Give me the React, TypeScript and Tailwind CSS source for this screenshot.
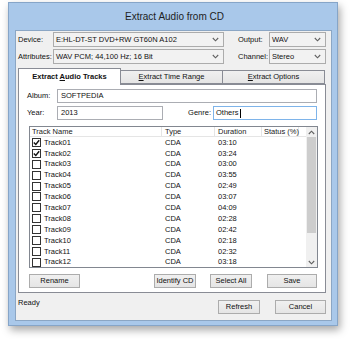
import React from 'react';

const tracks = [
  { name: 'Track01', dur: '03:10', on: true },
  { name: 'Track02', dur: '03:24', on: true },
  { name: 'Track03', dur: '03:00', on: false },
  { name: 'Track04', dur: '03:55', on: false },
  { name: 'Track05', dur: '02:49', on: false },
  { name: 'Track06', dur: '03:07', on: false },
  { name: 'Track07', dur: '04:09', on: false },
  { name: 'Track08', dur: '02:28', on: false },
  { name: 'Track09', dur: '02:42', on: false },
  { name: 'Track10', dur: '02:18', on: false },
  { name: 'Track11', dur: '02:32', on: false },
  { name: 'Track12', dur: '03:18', on: false },
];

const Chevron = ({ up = false }: { up?: boolean }) => (
  <svg width="7" height="5" viewBox="0 0 7 5" className={up ? 'rotate-180' : ''}>
    <path d="M0.8 1 L3.5 3.8 L6.2 1" fill="none" stroke="#606060" strokeWidth="1.1" />
  </svg>
);

const Check = ({ on }: { on: boolean }) => (
  <span className="flex h-[9px] w-[9px] shrink-0 items-center justify-center border border-[#333] bg-white">
    {on && (
      <svg width="7" height="7" viewBox="0 0 7 7">
        <path d="M0.8 3.4 L2.8 5.4 L6.2 1.2" fill="none" stroke="#111" strokeWidth="1.4" />
      </svg>
    )}
  </span>
);

const Button = ({ label, className }: { label: string; className: string }) => (
  <div
    className={`flex h-[14px] items-center justify-center whitespace-nowrap border border-[#acacac] bg-linear-to-b from-[#f0f0f0] to-[#e5e5e5] text-[7.5px] leading-none text-[#111] ${className}`}
  >
    {label}
  </div>
);

export default function App() {
  return (
    <div className="h-[339px] w-[350px] overflow-hidden whitespace-nowrap bg-white pt-[2px] font-['Liberation_Sans',Arial,sans-serif] text-[7.5px] leading-none text-[#111]">
      {/* window frame */}
      <div className="ml-[8px] flex h-[324px] w-[330px] flex-col border border-[#86a5c8] bg-[#a9c8ea] shadow-[2px_4px_8px_rgba(0,0,0,0.35)]">
        <div className="flex h-[27px] items-center justify-center pl-[3px] text-[10px] text-[#1e1e1e]">
          Extract Audio from CD
        </div>

        {/* client area */}
        <div className="ml-[6px] flex h-[291px] w-[317px] flex-col border border-[#8ba6c4] bg-[#f0f0f0]">
          {/* device / output */}
          <div className="ml-[2px] mt-[1px] flex h-[15px] items-center">
            <span className="w-[35px]">Device:</span>
            <div className="flex h-[15px] w-[171px] items-center justify-between border border-[#acacac] bg-[#f2f2f2] pl-[2px] pr-[4px]">
              <span>E:HL-DT-ST DVD+RW GT60N A102</span>
              <Chevron />
            </div>
            <span className="ml-[14px] w-[31px]">Output:</span>
            <div className="flex h-[15px] w-[57px] items-center justify-between border border-[#acacac] bg-[#f2f2f2] pl-[2px] pr-[4px]">
              <span>WAV</span>
              <Chevron />
            </div>
          </div>

          {/* attributes / channel */}
          <div className="ml-[2px] mt-[2px] flex h-[15px] items-center">
            <span className="w-[35px]">Attributes:</span>
            <div className="flex h-[15px] w-[171px] items-center justify-between border border-[#acacac] bg-[#f2f2f2] pl-[2px] pr-[4px]">
              <span>WAV PCM; 44,100 Hz; 16 Bit</span>
              <Chevron />
            </div>
            <span className="ml-[14px] w-[31px]">Channel:</span>
            <div className="flex h-[15px] w-[57px] items-center justify-between border border-[#acacac] bg-[#f2f2f2] pl-[2px] pr-[4px]">
              <span>Stereo</span>
              <Chevron />
            </div>
          </div>

          {/* tabs */}
          <div className="ml-[2px] mt-[4px] flex h-[16px] items-end">
            <div className="relative z-10 -mb-px flex h-[17px] w-[103px] items-center justify-center border border-b-0 border-[#898c95] bg-white font-bold">
              <span>
                Extract <span className="underline">A</span>udio Tracks
              </span>
            </div>
            <div className="flex h-[14px] w-[102px] items-center justify-center border border-l-0 border-[#898c95] bg-linear-to-b from-[#f0f0f0] to-[#e5e5e5]">
              <span>
                <span className="underline">E</span>xtract Time Range
              </span>
            </div>
            <div className="flex h-[14px] w-[102px] items-center justify-center border border-l-0 border-[#898c95] bg-linear-to-b from-[#f0f0f0] to-[#e5e5e5]">
              <span>
                <span className="underline">E</span>xtract Options
              </span>
            </div>
          </div>

          {/* tab panel */}
          <div className="ml-[2px] flex h-[209px] w-[308px] flex-col border border-[#898c95] bg-white">
            <div className="mt-[4px] flex h-[14px] items-center">
              <span className="w-[38px] pl-[8px]">Album:</span>
              <div className="flex h-[14px] w-[260px] items-center border border-[#abadb3] bg-white pl-[3px]">SOFTPEDIA</div>
            </div>
            <div className="mt-[3px] flex h-[14px] items-center">
              <span className="w-[38px] pl-[8px]">Year:</span>
              <div className="flex h-[14px] w-[106px] items-center border border-[#abadb3] bg-white pl-[3px]">2013</div>
              <span className="w-[50px] pr-[2px] text-right">Genre:</span>
              <div className="flex h-[14px] w-[104px] items-center border border-[#7eb4ea] bg-white pl-[2px]">
                Others<span className="ml-px h-[9px] w-px bg-black" />
              </div>
            </div>

            {/* track list */}
            <div className="ml-[10px] mt-[6px] flex h-[142px] w-[289px] border border-[#828790] bg-white">
              <div className="flex w-[276px] flex-col overflow-hidden">
                <div className="flex h-[10px] shrink-0 items-center border-b border-[#e5e5e5] text-[#222]">
                  <span className="flex h-full w-[132px] items-center border-r border-[#e5e5e5] pl-[2px]">Track Name</span>
                  <span className="flex h-full w-[53px] items-center border-r border-[#e5e5e5] pl-[3px]">Type</span>
                  <span className="flex h-full w-[47px] items-center border-r border-[#e5e5e5] pl-[3px]">Duration</span>
                  <span className="flex h-full w-[37px] items-center border-r border-[#e5e5e5] pl-[2px]">Status (%)</span>
                </div>
                {tracks.map((t) => (
                  <div key={t.name} className="flex h-[10.9px] shrink-0 items-center">
                    <div className="flex w-[132px] items-center pl-[2px]">
                      <Check on={t.on} />
                      <span className="ml-[3px]">{t.name}</span>
                    </div>
                    <span className="w-[53px] pl-[3px]">CDA</span>
                    <span className="w-[47px] pl-[3px]">{t.dur}</span>
                  </div>
                ))}
              </div>
              <div className="flex w-[11px] flex-col bg-[#f0f0f0]">
                <div className="flex h-[10px] items-center justify-center">
                  <Chevron up />
                </div>
                <div className="mx-px h-[96px] bg-[#cdcdcd]" />
                <div className="flex-1" />
                <div className="flex h-[10px] items-center justify-center">
                  <Chevron />
                </div>
              </div>
            </div>

            <div className="ml-[10px] mt-[6px] flex h-[14px]">
              <Button label="Rename" className="w-[51px]" />
              <Button label="Identify CD" className="ml-[74px] w-[42px]" />
              <Button label="Select All" className="ml-[14px] w-[42px]" />
              <Button label="Save" className="ml-[15px] w-[50px]" />
            </div>
          </div>

          {/* status row */}
          <div className="mr-[5px] mt-[7px] flex h-[14px] items-start pl-[2px]">
            <span className="mt-[-1px]">Ready</span>
            <Button label="Refresh" className="ml-auto w-[42px]" />
            <Button label="Cancel" className="ml-[15px] w-[51px]" />
          </div>
        </div>
      </div>
    </div>
  );
}
